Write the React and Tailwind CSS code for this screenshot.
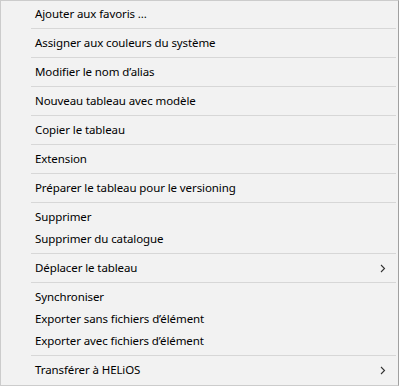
import { Fragment } from "react";

/**
 * Context menu (Windows style) for a table entry.
 */
const groups = [
  [{ label: "Ajouter aux favoris ..." }],
  [{ label: "Assigner aux couleurs du système" }],
  [{ label: "Modifier le nom d’alias" }],
  [{ label: "Nouveau tableau avec modèle" }],
  [{ label: "Copier le tableau" }],
  [{ label: "Extension" }],
  [{ label: "Préparer le tableau pour le versioning" }],
  [{ label: "Supprimer" }, { label: "Supprimer du catalogue" }],
  [{ label: "Déplacer le tableau", submenu: true }],
  [
    { label: "Synchroniser" },
    { label: "Exporter sans fichiers d’élément" },
    { label: "Exporter avec fichiers d’élément" },
  ],
  [{ label: "Transférer à HELiOS", submenu: true }],
];

function Chevron() {
  return (
    <svg width="6" height="9" viewBox="0 0 6 9" className="shrink-0">
      <path d="M1 1 L4.5 4.5 L1 8" fill="none" stroke="#333" strokeWidth="1.1" />
    </svg>
  );
}

function MenuItem({ item }) {
  return (
    <div className="h-[22px] flex items-center pl-[34px] pr-[12px] text-[11.5px] tracking-[-0.1px] text-[#000] leading-none">
      <span className="flex-1 whitespace-nowrap">{item.label}</span>
      {item.submenu && <Chevron />}
    </div>
  );
}

export default function App() {
  return (
    <div
      className="w-[399px] h-[386px] bg-[#f2f2f2] border border-[#cccccc] border-r-[#a0a0a0] flex flex-col"
      style={{ fontFamily: '"Noto Sans", "Open Sans", sans-serif' }}
    >
      {groups.map((group, gi) => (
        <Fragment key={gi}>
          {gi > 0 && <div className="h-px bg-[#d7d7d7] ml-[30px] mr-[2px]" />}
          <div className={gi === 0 ? "pt-[2px] pb-[3px]" : "py-[3px]"}>
            {group.map(item => (
              <MenuItem key={item.label} item={item} />
            ))}
          </div>
        </Fragment>
      ))}
    </div>
  );
}
